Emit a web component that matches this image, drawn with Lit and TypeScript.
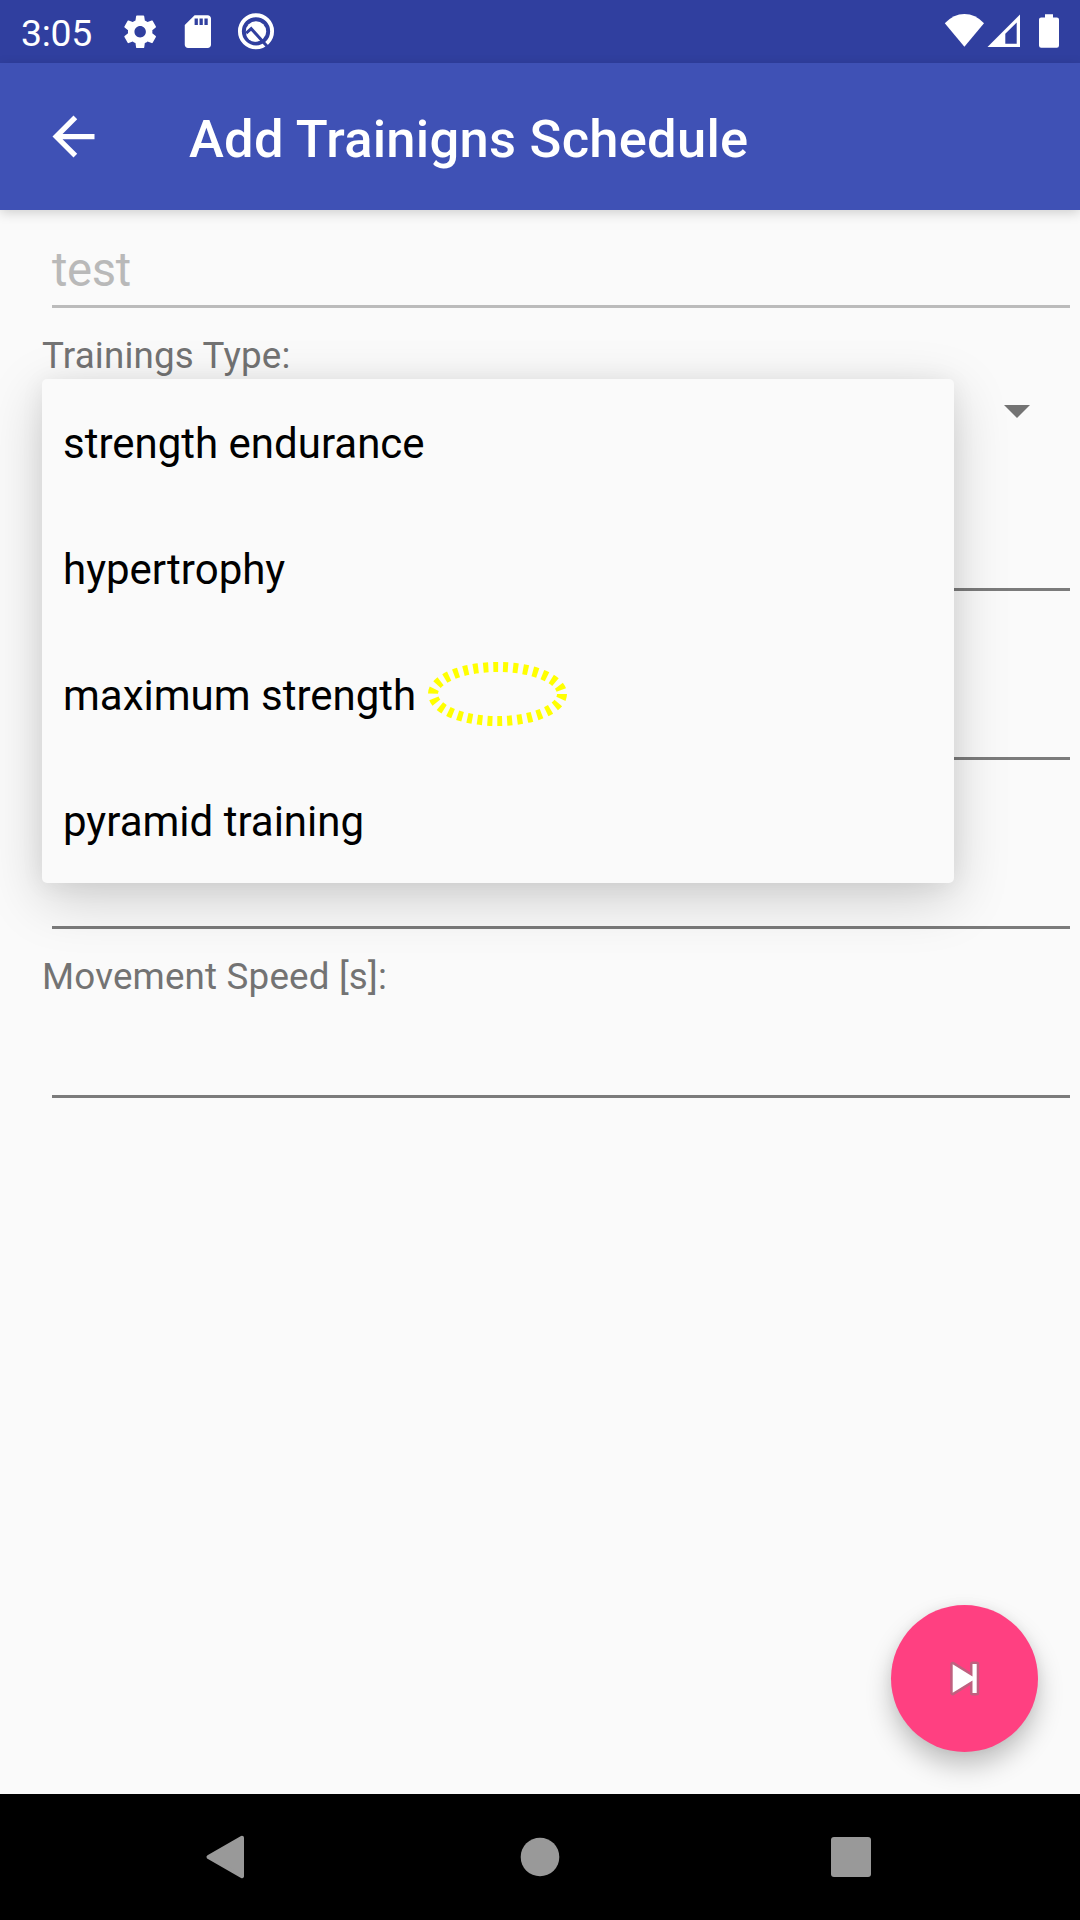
import { LitElement, html, css, svg } from "lit";
import { customElement, property } from "lit/decorators.js";

@customElement("status-bar")
class StatusBar extends LitElement {
  static styles = css`
    :host { display: flex; height: 63px; background: #303f9f; color: #fff; }
    .time { width: 101px; padding-left: 21px; box-sizing: border-box; font-size: 37.4px; line-height: 66px; letter-spacing: -.3px; }
    svg { display: block; }
  `;
  render() {
    return html`
      <div class="time">3:05</div>
      <svg width="979" height="63" viewBox="101 0 979 63" fill="#fff">
        <g transform="translate(120.6 12.2) scale(1.63)">
          <path d="M19.43 12.98c.04-.32.07-.64.07-.98s-.03-.66-.07-.98l2.11-1.65c.19-.15.24-.42.12-.64l-2-3.46c-.12-.22-.39-.3-.61-.22l-2.49 1c-.52-.4-1.08-.73-1.69-.98l-.38-2.65C14.46 2.18 14.25 2 14 2h-4c-.25 0-.46.18-.49.42l-.38 2.65c-.61.25-1.17.59-1.69.98l-2.49-1c-.23-.09-.49 0-.61.22l-2 3.46c-.13.22-.07.49.12.64l2.11 1.65c-.04.32-.07.65-.07.98s.03.66.07.98l-2.11 1.65c-.19.15-.24.42-.12.64l2 3.46c.12.22.39.3.61.22l2.49-1c.52.4 1.08.73 1.69.98l.38 2.65c.03.24.24.42.49.42h4c.25 0 .46-.18.49-.42l.38-2.65c.61-.25 1.17-.59 1.69-.98l2.49 1c.23.09.49 0 .61-.22l2-3.46c.12-.22.07-.49-.12-.64l-2.11-1.65zM12 15.5c-1.93 0-3.5-1.57-3.5-3.5s1.57-3.5 3.5-3.5 3.5 1.57 3.5 3.5-1.57 3.5-3.5 3.5z"/>
        </g>
        <g transform="translate(178.2 12) scale(1.64)">
          <path d="M18 2h-8L4 8v12c0 1.1.9 2 2 2h12c1.1 0 2-.9 2-2V4c0-1.1-.9-2-2-2zm-6 6h-2V4h2v4zm3 0h-2V4h2v4zm3 0h-2V4h2v4z"/>
        </g>
        <circle cx="256" cy="31.3" r="16.1" fill="none" stroke="#fff" stroke-width="3.9"/>
        <circle cx="256" cy="31.4" r="10.2"/>
        <path d="M246.2 33.2L251.2 28.7L267.5 46.8" fill="none" stroke="#303f9f" stroke-width="3"/>
        <path d="M250 32.6L258.3 41.2Q252.8 42.6 249 39.4Q246.8 37.2 246.4 35.6Z"/>
        <path d="M944.8 23.2Q953.6 14 964.4 14Q975.4 14 984 23.2L964.4 46.8Z"/>
        <path fill-rule="evenodd" d="M987.5 47L1020 14.5V47ZM1005.3 33.8V43.7H1016.7V22.4Z"/>
        <path d="M1045 14.2h8v3.2h3.8q2.2 0 2.2 2.2v26q0 2.2-2.2 2.2h-15.6q-2.2 0-2.2-2.2v-26q0-2.2 2.2-2.2h3.8z"/>
      </svg>
    `;
  }
}

@customElement("app-bar")
class AppBar extends LitElement {
  static styles = css`
    :host { display: flex; align-items: center; height: 147px; background: #3f51b5; color: #fff;
      box-shadow: 0 3px 11px rgba(0, 0, 0, .17); }
    .back { display: block; margin-left: 42px; }
    .title { margin-left: 84px; font-size: 52.5px; font-weight: 500; line-height: 62px; padding-top: 5px; letter-spacing: .26px; white-space: nowrap; }
  `;
  @property() heading = "";
  render() {
    return html`
      <svg class="back" width="63" height="63" viewBox="0 0 24 24" fill="#fff">
        <path d="M20 11H7.83l5.59-5.59L12 4l-8 8 8 8 1.41-1.41L7.83 13H20v-2z"/>
      </svg>
      <div class="title">${this.heading}</div>
    `;
  }
}

@customElement("form-field")
class FormField extends LitElement {
  static styles = css`
    :host { display: flex; flex-direction: column; height: 169px; color: #737373; }
    .label { height: 49px; padding: 12px 0 0 42px; font-size: 36.75px; line-height: 50px; letter-spacing: .18px; }
    .input { flex: 1; margin: 0 10px 11px 52px; border-bottom: 3px solid #7b7b7b; }
  `;
  @property() label = "";
  render() {
    return html`<div class="label">${this.label}</div><div class="input"></div>`;
  }
}

@customElement("nav-bar")
class NavBar extends LitElement {
  static styles = css`
    :host { display: flex; height: 126px; background: #000; }
    svg { display: block; }
  `;
  render() {
    return html`
      <svg width="1080" height="126" viewBox="0 0 1080 126" fill="#999">
        <path d="M242 43.8L208.5 63L242 82.2Z" stroke="#999" stroke-width="4" stroke-linejoin="round"/>
        <circle cx="540" cy="63" r="19.3"/>
        <rect x="831" y="43" width="40" height="40" rx="3"/>
      </svg>
    `;
  }
}

@customElement("app-root")
class AppRoot extends LitElement {
  static styles = css`
    :host { display: flex; flex-direction: column; position: relative; width: 1080px; height: 1920px;
      overflow: hidden; background: #fafafa; font-family: Roboto, sans-serif; }
    .form { flex: 1; display: flex; flex-direction: column; }
    .name { height: 95px; box-sizing: content-box; margin: 0 10px 11px 52px; border-bottom: 3px solid #bbb;
      color: #b9b9b9; font-size: 47.25px; line-height: 121px; letter-spacing: -.35px; }
    .label { height: 49px; padding: 12px 0 0 42px; color: #737373; font-size: 36.75px; line-height: 50px; letter-spacing: .18px; }
    .spinner { height: 53px; display: flex; justify-content: flex-end; padding: 25px 50px 0 0; box-sizing: border-box; }
    .caret { display: block; width: 26px; height: 13px; }
    .menu { position: absolute; left: 42px; top: 379px; width: 912px; border-radius: 5px; background: #fafafa;
      box-shadow: 0 16px 56px rgba(0, 0, 0, .18), 0 2px 24px rgba(0, 0, 0, .06); }
    .option { height: 126px; padding: 3px 0 0 21px; box-sizing: border-box; color: #000; font-size: 42px; line-height: 124px; }
    .mark { position: absolute; left: 420px; top: 655px; }
    .fab { position: absolute; left: 891px; top: 1605px; width: 147px; height: 147px; border-radius: 50%;
      background: #ff4081; box-shadow: 0 14px 26px rgba(0, 0, 0, .23), 0 0 12px rgba(0, 0, 0, .05); }
    .fab svg { display: block; }
  `;
  private options = ["strength endurance", "hypertrophy", "maximum strength", "pyramid training"];
  render() {
    return html`
      <status-bar></status-bar>
      <app-bar heading="Add Trainigns Schedule"></app-bar>
      <div class="form">
        <div class="name">test</div>
        <div class="label">Trainings Type:</div>
        <div class="spinner">
          <svg class="caret" viewBox="0 0 26 13"><path d="M0 0H26L13 13Z" fill="#737373"/></svg>
        </div>
        <form-field></form-field>
        <form-field></form-field>
        <form-field></form-field>
        <form-field label="Movement Speed [s]:"></form-field>
      </div>
      <nav-bar></nav-bar>
      <div class="menu">${this.options.map((o) => html`<div class="option">${o}</div>`)}</div>
      <svg class="mark" width="156" height="80" viewBox="420 655 156 80">
        <ellipse cx="497.5" cy="694" rx="64.5" ry="27" fill="none" stroke="#ff0" stroke-width="10" stroke-dasharray="5 5"/>
      </svg>
      <div class="fab">
        <svg width="147" height="147" viewBox="891 1605 147 147">
          ${["#c0607f", "#fff"].map((c, i) => svg`
            <path d="M952.7 1664.2L972.5 1676.6V1664H976.7V1693H972.5V1680.6L952.7 1692.8Z"
              fill=${c} stroke=${i ? "none" : c} stroke-width="5" stroke-linejoin="round"/>`)}
        </svg>
      </div>
    `;
  }
}
